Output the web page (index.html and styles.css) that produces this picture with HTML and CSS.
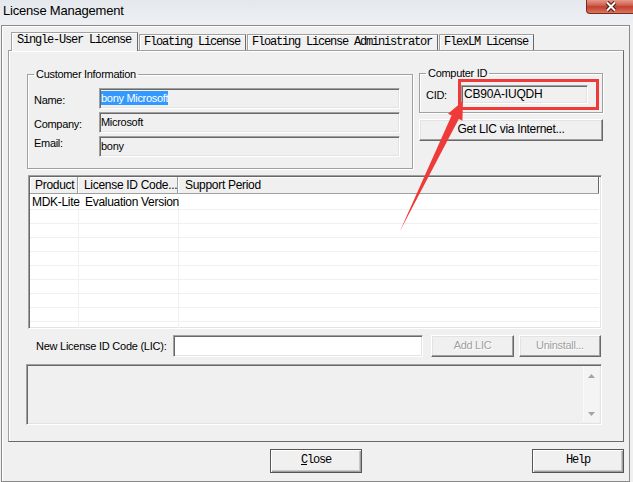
FILE: index.html
```html
<!DOCTYPE html>
<html>
  <head>
    <title>License Management</title>
    <link rel="stylesheet" href="styles.css">
  </head>
  <body>
    <div class="titlebar">
      <span class="title">License Management</span>
      <div class="close-btn">
        <svg width="14" height="11" viewBox="0 0 14 11">
          <path d="M3 1.5 L11 9.5 M11 1.5 L3 9.5" stroke="#4a1a14" stroke-width="4"/>
          <path d="M3 1.5 L11 9.5 M11 1.5 L3 9.5" stroke="#fff" stroke-width="2"/>
        </svg>
      </div>
    </div>

    <div class="frame">
      <div class="tabs">
        <div class="tab active">Single-User License</div>
        <div class="tab">Floating License</div>
        <div class="tab">Floating License Administrator</div>
        <div class="tab">FlexLM License</div>
      </div>

      <div class="panel">
        <div class="top-row">
          <fieldset class="group customer">
            <legend>Customer Information</legend>
            <div class="form-row">
              <label>Name:</label>
              <div class="field"><span class="selected">bony Microsoft</span></div>
            </div>
            <div class="form-row">
              <label>Company:</label>
              <div class="field">Microsoft</div>
            </div>
            <div class="form-row email">
              <label>Email:</label>
              <div class="field">bony</div>
            </div>
          </fieldset>

          <div class="cid-col">
            <fieldset class="group computer">
              <legend>Computer ID</legend>
              <div class="cid-row">
                <label>CID:</label>
                <div class="field cid-field">CB90A-IUQDH</div>
                <div class="mark-box"></div>
              </div>
            </fieldset>
            <div class="btn wide">Get LIC via Internet...</div>
          </div>
        </div>

        <div class="list">
          <div class="list-head">
            <div class="hcell c1">Product</div>
            <div class="hcell c2">License ID Code...</div>
            <div class="hcell c3">Support Period</div>
          </div>
          <div class="list-body">
            <div class="lrow"><div class="cell c1 first">MDK-Lite</div><div class="cell c2">Evaluation Version</div><div class="cell c3"></div></div>
            <div class="lrow"><div class="cell c1"></div><div class="cell c2"></div><div class="cell c3"></div></div>
            <div class="lrow"><div class="cell c1"></div><div class="cell c2"></div><div class="cell c3"></div></div>
            <div class="lrow"><div class="cell c1"></div><div class="cell c2"></div><div class="cell c3"></div></div>
            <div class="lrow"><div class="cell c1"></div><div class="cell c2"></div><div class="cell c3"></div></div>
            <div class="lrow"><div class="cell c1"></div><div class="cell c2"></div><div class="cell c3"></div></div>
            <div class="lrow"><div class="cell c1"></div><div class="cell c2"></div><div class="cell c3"></div></div>
            <div class="lrow"><div class="cell c1"></div><div class="cell c2"></div><div class="cell c3"></div></div>
            <div class="lrow"><div class="cell c1"></div><div class="cell c2"></div><div class="cell c3"></div></div>
            <div class="lrow"><div class="cell c1"></div><div class="cell c2"></div><div class="cell c3"></div></div>
          </div>
        </div>

        <div class="lic-row">
          <label>New License ID Code (LIC):</label>
          <div class="field lic-input"></div>
          <div class="btn disabled add">Add LIC</div>
          <div class="btn disabled uninstall">Uninstall...</div>
        </div>

        <div class="memo">
          <div class="memo-text"></div>
          <div class="scrollbar">
            <svg width="7" height="4" viewBox="0 0 7 4"><path d="M0 4 L3.5 0 L7 4 Z" fill="#a3a3a3"/></svg>
            <svg width="7" height="4" viewBox="0 0 7 4"><path d="M0 0 L3.5 4 L7 0 Z" fill="#a3a3a3"/></svg>
          </div>
        </div>
      </div>

      <div class="bottom-bar">
        <div class="btn dlg close"><u>C</u>lose</div>
        <div class="btn dlg help">Help</div>
      </div>
    </div>

    <svg class="arrow" width="633" height="482" viewBox="0 0 633 482">
      <polygon points="463,101 462.4,120.7 458.8,118.9 400,231 451.6,115.5 448,113.7" fill="#ef3a3a"/>
    </svg>
  </body>
</html>
```

FILE: styles.css
```css
body {
  margin: 0;
  width: 633px;
  height: 482px;
  overflow: hidden;
  background: #f0f0f0;
  color: #000;
  font-family: "Liberation Sans", Arial, sans-serif;
  font-size: 11px;
  letter-spacing: -0.3px;
  position: relative;
}

/* title bar */
.titlebar {
  height: 25px;
  display: flex;
  justify-content: space-between;
  align-items: flex-start;
  background: linear-gradient(#e4e8ed, #eef0f3);
  overflow: hidden;
}
.title {
  font-size: 13px;
  letter-spacing: -0.2px;
  line-height: 21px;
  padding-left: 3px;
}
.close-btn {
  width: 48px;
  height: 14px;
  margin-right: -3px;
  margin-top: -1px;
  border: 1px solid #7a2b20;
  border-top: none;
  border-radius: 0 0 4px 4px;
  background: linear-gradient(#e9a497, #d0604f 45%, #c2402e 55%, #d9765f);
  display: flex;
  justify-content: center;
  align-items: center;
}

/* dialog frame */
.frame {
  margin-left: 1px;
  width: 629px;
  height: 457px;
  box-sizing: border-box;
  border: 1px solid #8a8a8a;
  box-shadow: inset 1px 1px #fff;
  padding: 6px 5px 0 6px;
}

.tabs {
  display: flex;
  align-items: flex-end;
  height: 18px;
  padding-left: 5px;
  font-family: "Liberation Mono", "Courier New", monospace;
  font-size: 12px;
  letter-spacing: -1.2px;
}
.tab {
  box-sizing: border-box;
  height: 16px;
  line-height: 15px;
  padding: 0 5px 0 4px;
  margin-right: 1px;
  border: 1px solid #a0a0a0;
  border-right-color: #696969;
  border-bottom: none;
  box-shadow: inset 1px 1px #fff;
  white-space: nowrap;
}
.tab.active {
  height: 19px;
  line-height: 15px;
  margin-bottom: -1px;
  margin-left: -2px;
  padding: 0 6px 0 5px;
  background: #f0f0f0;
  position: relative;
  z-index: 1;
}

.panel {
  box-sizing: border-box;
  height: 392px;
  border: 1px solid #a0a0a0;
  border-right-color: #696969;
  border-bottom-color: #696969;
  box-shadow: inset 1px 1px #fff;
  padding: 17px 0 0 0;
}

/* group boxes */
.top-row {
  display: flex;
  align-items: flex-start;
}
.group {
  margin: 0;
  border: 1px solid #a0a0a0;
  box-shadow: inset 1px 1px #fff, 1px 1px #fff;
}
.group legend {
  padding: 0 2px;
  line-height: 13px;
}
.customer {
  margin-left: 18px;
  width: 386px;
  box-sizing: border-box;
  padding: 7px 12px 11px 6px;
}
.form-row {
  display: flex;
  align-items: center;
  margin-bottom: 3px;
}
.form-row + .form-row.email {
  margin-top: 1px;
  margin-bottom: 0;
  align-items: flex-start;
}
.form-row.email label {
  padding-top: 1px;
}
.form-row label {
  width: 65px;
  padding-top: 2px;
}

.field {
  flex: 1;
  box-sizing: border-box;
  height: 21px;
  line-height: 18px;
  padding-left: 1px;
  border: 1px solid;
  border-color: #a0a0a0 #fff #fff #a0a0a0;
  box-shadow: inset 1px 1px #696969, inset -1px -1px #e3e3e3;
  background: #f0f0f0;
  white-space: nowrap;
}
.selected {
  background: #3399ff;
  color: #fff;
  padding: 1px 0;
}

.cid-col {
  margin-left: 6px;
  margin-top: -1px;
  width: 184px;
}
.computer {
  box-sizing: border-box;
  padding: 5px 14px 8px 6px;
}
.cid-row {
  display: flex;
  align-items: center;
  position: relative;
}
.cid-row label {
  width: 35px;
}
.cid-field {
  height: 19px;
  line-height: 17px;
  font-size: 12px;
  letter-spacing: -0.2px;
  padding-left: 2px;
}
.mark-box {
  position: absolute;
  left: 32px;
  top: -6px;
  width: 141px;
  height: 31px;
  box-sizing: border-box;
  border: 3px solid #ef3a3a;
}

/* buttons */
.btn {
  box-sizing: border-box;
  height: 22px;
  line-height: 19px;
  text-align: center;
  border: 1px solid;
  border-color: #fff #696969 #696969 #fff;
  box-shadow: inset -1px -1px #a0a0a0, inset 1px 1px #e3e3e3;
  background: #f0f0f0;
  white-space: nowrap;
}
.btn.wide {
  margin-top: 6px;
  font-size: 12px;
  letter-spacing: -0.3px;
}
.btn.disabled {
  color: #a0a0a0;
  text-shadow: 1px 1px #fff;
}

/* list view */
.list {
  margin: 6px 0 0 19px;
  width: 574px;
  height: 154px;
  box-sizing: border-box;
  border: 1px solid;
  border-color: #a0a0a0 #fff #fff #a0a0a0;
  box-shadow: inset 1px 1px #696969, inset -1px -1px #e3e3e3;
  background: #fff;
  padding: 1px 2px 0 1px;
  overflow: hidden;
}
.list-head {
  display: flex;
  height: 17px;
  box-sizing: border-box;
  border-bottom: 1px solid #a0a0a0;
  background: #f0f0f0;
  line-height: 16px;
  font-size: 12px;
  letter-spacing: -0.3px;
}
.hcell {
  box-sizing: border-box;
  border-right: 1px solid #a0a0a0;
  box-shadow: inset 1px 1px #fff;
  white-space: nowrap;
}
.hcell.c1 {
  width: 48px;
  padding-left: 5px;
}
.hcell.c2 {
  width: 100px;
  padding-left: 6px;
}
.hcell.c3 {
  flex: 1;
  padding-left: 7px;
  border-right-color: #696969;
}
.list-body {
  padding-top: 2px;
}
.lrow {
  display: flex;
  height: 14px;
  box-sizing: border-box;
  border-bottom: 1px solid #f0f0f0;
  line-height: 13px;
  font-size: 12px;
  letter-spacing: -0.3px;
}
.cell {
  box-sizing: border-box;
  border-right: 1px solid #f0f0f0;
  white-space: nowrap;
}
.cell.c1 {
  width: 49px;
  padding-left: 2px;
}
.cell.c2 {
  width: 100px;
  padding-left: 6px;
}
.cell.c3 {
  flex: 1;
  border-right: none;
}

/* new LIC row */
.lic-row {
  display: flex;
  align-items: center;
  margin: 6px 0 0 27px;
  height: 22px;
}
.lic-row label {
  width: 137px;
  letter-spacing: -0.25px;
}
.lic-input {
  flex: none;
  width: 250px;
  height: 22px;
  background: #fff;
}
.btn.add {
  width: 83px;
  margin-left: 8px;
}
.btn.uninstall {
  width: 82px;
  margin-left: 5px;
}

/* message area */
.memo {
  display: flex;
  margin: 7px 0 0 17px;
  width: 576px;
  height: 61px;
  box-sizing: border-box;
  border: 1px solid;
  border-color: #a0a0a0 #fff #fff #a0a0a0;
  box-shadow: inset 1px 1px #696969, inset -1px -1px #e3e3e3;
  padding: 1px 2px 2px 1px;
}
.memo-text {
  flex: 1;
}
.scrollbar {
  width: 15px;
  display: flex;
  flex-direction: column;
  justify-content: space-between;
  align-items: center;
  padding: 8px 0 6px;
  background: #f4f4f4;
  border-left: 1px solid #fafafa;
}

/* dialog buttons */
.bottom-bar {
  display: flex;
  margin-top: 7px;
  font-family: "Liberation Mono", "Courier New", monospace;
  font-size: 12px;
  letter-spacing: -1.2px;
}
.btn.dlg {
  width: 92px;
  height: 24px;
  line-height: 21px;
  border: 1px solid #555;
  box-shadow: inset 1px 1px #fff, inset -1px -1px #a0a0a0, inset -2px -2px #c8c8c8;
}
.btn.close {
  margin-left: 262px;
}
.btn.help {
  margin-left: auto;
}

.arrow {
  position: absolute;
  left: 0;
  top: 0;
  pointer-events: none;
}
```
